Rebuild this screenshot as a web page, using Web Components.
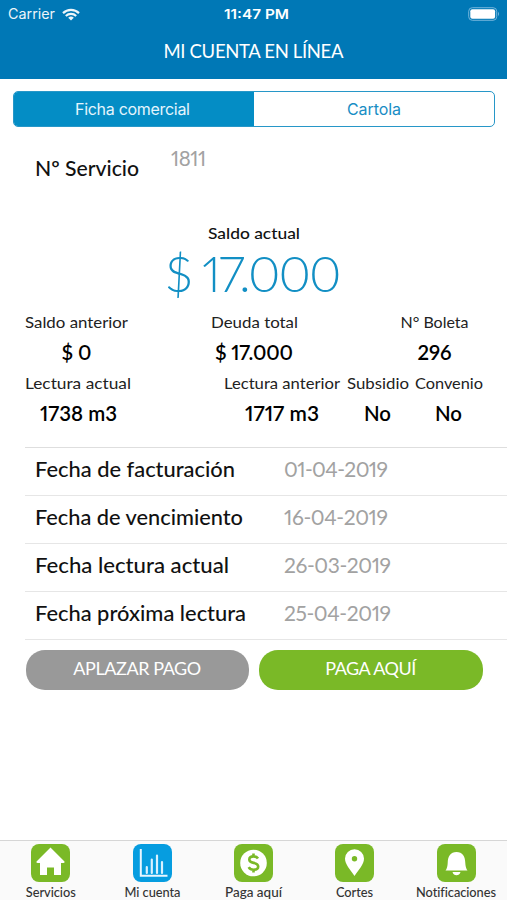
<!DOCTYPE html>
<html lang="es">
<head>
<meta charset="utf-8">
<title>Mi cuenta en línea</title>
<style>
html,body{margin:0;height:100%;background:#fff}
body{font-family:Lato,"Open Sans",sans-serif;color:#111}
</style>
</head>
<body>
<account-app></account-app>
<script>
const define = (name, html) => {
  const tpl = document.createElement('template');
  tpl.innerHTML = html;
  customElements.define(name, class extends HTMLElement {
    connectedCallback() {
      if (this.shadowRoot) return;
      this.attachShadow({mode: 'open'}).appendChild(tpl.content.cloneNode(true));
    }
  });
};

// One line of text that spans the width given in "w": widened letters when short, tighter tracking when long.
customElements.define('fit-text', class extends HTMLElement {
  connectedCallback() {
    if (this.shadowRoot) return;
    const root = this.attachShadow({mode: 'open'});
    root.innerHTML = `<style>:host{display:block;flex:none;white-space:pre;line-height:20px;height:20px}span{display:inline-block;transform-origin:0 50%;font-variant-numeric:proportional-nums}</style><span></span>`;
    const s = root.querySelector('span'), w = +this.getAttribute('w');
    s.textContent = this.getAttribute('text');
    this.style.fontSize = this.getAttribute('size') + 'px';
    this.style.fontWeight = this.getAttribute('weight') || 400;
    this.style.width = w + 'px';
    const n = s.textContent.length - 1, natural = s.getBoundingClientRect().width;
    if (natural < w) s.style.transform = `scaleX(${w / natural})`;
    else s.style.letterSpacing = (w - natural) / n + 'px';
  }
});

define('status-bar', `<style>
:host{display:grid;grid-template-columns:1fr auto 1fr;align-items:center;height:28px;padding:0 7px 0 8px;font-family:Inter,sans-serif;color:#fff}
.l{display:flex;align-items:center;gap:7px;opacity:.93}svg{display:block}.b{justify-self:end}.t{margin-left:5px}
</style>
<div class="l"><fit-text text="Carrier" size="14" w="47"></fit-text>
<svg width="18" height="13" viewBox="0 0 18 13" fill="none" stroke="#fff" stroke-width="2.2"><path d="M1 5.1a11.6 11.6 0 0 1 16 0M3.8 8a7.6 7.6 0 0 1 10.4 0"/><path d="M9 12.6 6.2 9.8a4.1 4.1 0 0 1 5.6 0z" fill="#fff" stroke="none"/></svg></div>
<fit-text class="t" text="11:47 PM" size="13.5" weight="600" w="65"></fit-text>
<svg class="b" width="32" height="14" viewBox="0 0 32 14"><rect x=".7" y=".7" width="28" height="12.6" rx="3.6" fill="none" stroke="#73b5dc"/><rect x="2.3" y="2.3" width="24.8" height="9.4" rx="2" fill="#fff"/><path d="M30 4.8q2 2.2 0 4.4z" fill="#73b5dc"/></svg>`);

define('nav-title', `<style>:host{display:flex;justify-content:center;align-items:center;height:46px;color:#fff}</style>
<fit-text text="MI CUENTA EN LÍNEA" size="18.5" w="180"></fit-text>`);

define('segment-control', `<style>
:host{display:grid;grid-template-columns:1fr 1fr;height:36px;margin:12px 12px 0 13px;box-sizing:border-box;border:1.4px solid #2797c8;border-radius:5px;overflow:hidden;font-family:Inter,sans-serif}
div{display:flex;align-items:center;justify-content:center;color:#188dc4}.on{background:#048dc5;color:#e4f5fd}
.on fit-text{margin-right:3px}
</style><div class="on"><fit-text text="Ficha comercial" size="16" w="115"></fit-text></div><div><fit-text text="Cartola" size="16" w="54"></fit-text></div>`);

customElements.define('stat-cell', class extends HTMLElement {
  connectedCallback() {
    if (this.shadowRoot) return;
    const g = k => this.getAttribute(k);
    this.attachShadow({mode:'open'}).innerHTML = `<style>:host{display:flex;flex-direction:column;align-items:center;gap:10px}.l{color:#222}.v{color:#000}</style>
    <fit-text class="l" size="16" text="${g('label')}" w="${g('lw')}"></fit-text><fit-text class="v" size="20.3" weight="600" text="${g('value')}" w="${g('vw')}"></fit-text>`;
  }
});

customElements.define('date-row', class extends HTMLElement {
  connectedCallback() {
    if (this.shadowRoot) return;
    const g = k => this.getAttribute(k);
    this.attachShadow({mode:'open'}).innerHTML = `<style>:host{display:grid;grid-template-columns:249px 1fr;align-items:center;height:48.1px;box-sizing:border-box;padding:0 0 5px 10px;margin-left:25px;border-bottom:1px solid #e6e6e6}.v{color:#a2a2a2}</style>
    <fit-text size="21.2" weight="500" text="${g('label')}" w="${g('lw')}"></fit-text><fit-text class="v" size="21" text="${g('value')}" w="${g('vw')}"></fit-text>`;
  }
});

define('pill-button', `<style>:host{display:flex;justify-content:center;height:40px;box-sizing:border-box;padding-top:8px;border-radius:19px;background:var(--fill);color:#fff}</style><slot></slot>`);

const glyphs = {
  home: '<path d="M19 3.500 33 17.400q.5 1.600-1.400 1.600H29.500v12h-7v-7.500h-7V31h-7V19H6.400q-1.900 0-1.400-1.600z" fill="#fff"/>',
  chart: '<path d="M7.300 5v26.800H34" fill="none" stroke="#e8f6ff" stroke-width="2"/><path d="M13.300 29v-6M18.300 29V15.500M23.500 29V11.500M28.500 29V18" stroke="#d9f1ff" stroke-width="2.200" stroke-linecap="round"/>',
  coin: '<circle cx="19" cy="19" r="13.300" fill="#fff"/><path d="M23.500 14.500Q22.200 12.400 19 12.400q-4.200 0-4.200 3.200 0 2.600 4.300 3.300 4.600.7 4.600 3.700 0 3.200-4.500 3.200-3.600 0-5-2.600M19 9.500v3M19 25.500v3" fill="none" stroke="#7ab927" stroke-width="2.600"/>',
  pin: '<path fill-rule="evenodd" d="M19 5.200a9.400 9.400 0 0 0-9.500 9.300C9.500 20.500 14.500 25 19 32c4.500-7 9.500-11.500 9.500-17.500A9.400 9.400 0 0 0 19 5.200zm0 6.800a2.700 2.700 0 1 1 0 5.400 2.700 2.700 0 0 1 0-5.400z" fill="#fff"/>',
  bell: '<path d="M8 26.500q2-2.300 2.200-7.500C10.400 12 13 8 19 8s8.600 4 8.800 11q.2 5.200 2.200 7.500zM15 28h8q-1 3.200-4 3.200T15 28z" fill="#fff"/>'
};
customElements.define('tab-item', class extends HTMLElement {
  connectedCallback() {
    if (this.shadowRoot) return;
    const g = k => this.getAttribute(k);
    this.attachShadow({mode:'open'}).innerHTML = `<style>:host{display:flex;flex-direction:column;align-items:center;color:#333}svg{display:block}fit-text{margin-top:-.5px}</style>
    <svg width="39" height="38" viewBox="-.5 0 39 38"><rect x="-.5" width="39" height="38" rx="8" fill="${g('fill') || '#7ab927'}"/>${glyphs[g('icon')]}</svg>
    <fit-text size="12.8" weight="500" text="${g('label')}" w="${g('lw')}"></fit-text>`;
  }
});

define('tab-bar', `<style>:host{display:grid;grid-template-columns:101.500px 102px 100.500px 101px 102px;height:60px;box-sizing:border-box;border-top:1px solid #d6d6d6;background:#fafafa;padding-top:3px}
</style>
<tab-item icon="home" label="Servicios" lw="50"></tab-item>
<tab-item icon="chart" fill="#069de0" label="Mi cuenta" lw="56"></tab-item>
<tab-item icon="coin" label="Paga aquí" lw="57"></tab-item>
<tab-item icon="pin" label="Cortes" lw="37"></tab-item>
<tab-item icon="bell" label="Notificaciones" lw="80"></tab-item>`);

define('account-app', `<style>
:host{display:flex;flex-direction:column;width:507px;height:900px;background:#fff;overflow:hidden}
header{background:#0078b6;height:79px}
.service{display:flex;padding:21px 0 0 35px;height:76px;gap:32px}
.service .n{margin-top:10px}.grey{color:#a2a2a2}
.balance{display:flex;flex-direction:column;align-items:center;gap:20px;height:89px}
.big{color:#128fc4}
.r{display:flex;height:61px}
.r1{padding-left:25px}.r1 :nth-child(2){margin-left:82.500px}.r1 :nth-child(3){margin-left:103px}
.r2{padding-left:25px;height:73.500px}.r2 :nth-child(2){margin-left:92.500px}.r2 :nth-child(3){margin-left:7px}.r2 :nth-child(4){margin-left:6px}
.line{height:1px;margin-left:25px;background:#dedede}
.service,.balance,.r{position:static}
.balance{margin-top:-1px}
.buttons{display:grid;grid-template-columns:1fr 1fr;gap:10px;padding:10px 24.500px 0 25.500px}
.grow{flex:1}
</style>
<header><status-bar></status-bar><nav-title></nav-title></header>
<segment-control></segment-control>
<div class="service"><fit-text class="n" text="Nº Servicio" size="20.5" weight="500" w="104"></fit-text><fit-text class="grey" text="1811" size="20.5" w="35"></fit-text></div>
<div class="balance"><fit-text text="Saldo actual" size="15.8" weight="500" w="92"></fit-text><fit-text class="big" text="$ 17.000" size="50" weight="300" w="176"></fit-text></div>
<div class="r r1"><stat-cell label="Saldo anterior" lw="103" value="$ 0" vw="30"></stat-cell><stat-cell label="Deuda total" lw="87" value="$ 17.000" vw="78"></stat-cell><stat-cell label="N° Boleta" lw="68" value="296" vw="34"></stat-cell></div>
<div class="r r2"><stat-cell label="Lectura actual" lw="106" value="1738 m3" vw="77"></stat-cell><stat-cell label="Lectura anterior" lw="116" value="1717 m3" vw="74"></stat-cell><stat-cell label="Subsidio" lw="62" value="No" vw="27"></stat-cell><stat-cell label="Convenio" lw="68" value="No" vw="27"></stat-cell></div>
<div class="line"></div>
<date-row label="Fecha de facturación" lw="200" value="01-04-2019" vw="104"></date-row>
<date-row label="Fecha de vencimiento" lw="208" value="16-04-2019" vw="104"></date-row>
<date-row label="Fecha lectura actual" lw="194" value="26-03-2019" vw="107"></date-row>
<date-row label="Fecha próxima lectura" lw="211" value="25-04-2019" vw="107"></date-row>
<div class="buttons"><pill-button style="--fill:#999"><fit-text text="APLAZAR PAGO" size="18" w="128"></fit-text></pill-button><pill-button style="--fill:#7ab927"><fit-text text="PAGA AQUÍ" size="18" w="91"></fit-text></pill-button></div>
<div class="grow"></div>
<tab-bar></tab-bar>`);
</script>
</body>
</html>
